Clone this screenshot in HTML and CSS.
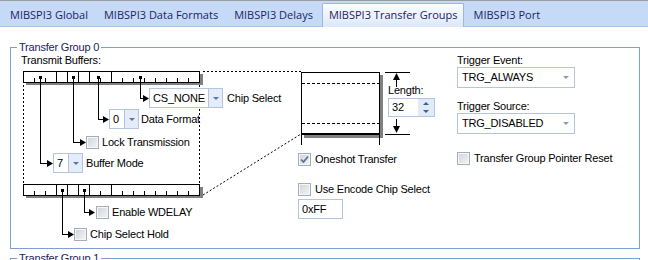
FILE: index.html
```html
<!DOCTYPE html>
<html lang="en">
<head>
    <meta charset="UTF-8">
    <title>MIBSPI3 Transfer Groups</title>
    <link rel="stylesheet" href="styles.css">
</head>
<body>
    <div class="tabs">
        <div class="tab">MIBSPI3 Global</div>
        <div class="tab">MIBSPI3 Data Formats</div>
        <div class="tab">MIBSPI3 Delays</div>
        <div class="tab active">MIBSPI3 Transfer Groups</div>
        <div class="tab">MIBSPI3 Port</div>
    </div>

    <div class="page">
        <fieldset class="group">
            <legend>Transfer Group 0</legend>
            <div class="group-body">

                <div class="diagram">
                    <!-- wires are drawn in page coordinates, the viewBox starts at the diagram's corner -->
                    <svg class="wires" width="446" height="194" viewBox="11 54 446 194">
                        <g fill="#808080">
                            <rect x="26" y="74" width="177" height="11"/>
                            <rect x="26" y="187" width="177" height="11"/>
                            <rect x="304" y="75" width="79" height="63"/>
                        </g>
                        <g fill="#fff" stroke="#000">
                            <rect x="23.5" y="71.5" width="176" height="11"/>
                            <rect x="23.5" y="184.5" width="176" height="11"/>
                            <rect x="301.5" y="72.5" width="78" height="62"/>
                        </g>
                        <g stroke="#000" fill="none" shape-rendering="crispEdges">
                            <path d="M56.5 72V82M67.5 72V82M78.5 72V82M89.5 72V82M111.5 72V82
                                     M34.5 78V82M45.5 78V82M100.5 78V82M122.5 78V82M133.5 78V82M144.5 78V82
                                     M155.5 78V82M166.5 78V82M177.5 78V82M188.5 78V82"/>
                            <path d="M56.5 185V195M67.5 185V195M78.5 185V195M89.5 185V195M111.5 185V195
                                     M34.5 191V195M45.5 191V195M100.5 191V195M122.5 191V195M133.5 191V195M144.5 191V195
                                     M155.5 191V195M166.5 191V195M177.5 191V195M188.5 191V195"/>
                            <path d="M40.5 77V163.5H47M73.5 77V142.5H80M98.5 77V119.5H103M140.5 77V98.5H143"/>
                            <path d="M62.5 190V234.5H68M84.5 190V212.5H89"/>
                            <path d="M301 134H380" stroke-width="2"/>
                            <path d="M301.5 135V145M379.5 135V145"/>
                            <path d="M385 72.5H410M385 134.5H410M396.5 79V87M396.5 119V127"/>
                        </g>
                        <g stroke="#000" fill="none" stroke-dasharray="2 2">
                            <path d="M23.5 85V184M199.5 85V184M203 71.5H301" shape-rendering="crispEdges"/>
                            <path d="M203 195L301 134"/>
                            <path d="M302 83.5H379M302 123.5H379" stroke-dasharray="3 2" shape-rendering="crispEdges"/>
                        </g>
                        <g fill="#000">
                            <rect x="39" y="76" width="3" height="3"/>
                            <rect x="72" y="76" width="3" height="3"/>
                            <rect x="97" y="76" width="3" height="3"/>
                            <rect x="139" y="76" width="3" height="3"/>
                            <rect x="61" y="189" width="3" height="3"/>
                            <rect x="83" y="189" width="3" height="3"/>
                            <polygon points="47,160 53,163.5 47,167"/>
                            <polygon points="80,139 86,142.5 80,146"/>
                            <polygon points="103,116 109,119.5 103,123"/>
                            <polygon points="143,95 149,98.5 143,102"/>
                            <polygon points="68,231 74,234.5 68,238"/>
                            <polygon points="89,209 95,212.5 89,216"/>
                            <polygon points="393,80 396.5,73 400,80"/>
                            <polygon points="393,126 396.5,133 400,126"/>
                        </g>
                    </svg>

                    <div class="caption">Transmit Buffers:</div>

                    <div class="node n-cs">
                        <div class="combo w-cs"><span class="value">CS_NONE</span><span class="drop"></span></div>
                        <span>Chip Select</span>
                    </div>
                    <div class="node n-df">
                        <div class="combo w-small"><span class="value">0</span><span class="drop"></span></div>
                        <span>Data Format</span>
                    </div>
                    <div class="node n-lock">
                        <span class="check"></span>
                        <span>Lock Transmission</span>
                    </div>
                    <div class="node n-buf">
                        <div class="combo w-small"><span class="value">7</span><span class="drop"></span></div>
                        <span>Buffer Mode</span>
                    </div>
                    <div class="node n-wdel">
                        <span class="check"></span>
                        <span>Enable WDELAY</span>
                    </div>
                    <div class="node n-csh">
                        <span class="check"></span>
                        <span>Chip Select Hold</span>
                    </div>

                    <div class="length">
                        <div class="length-label">Length:</div>
                        <div class="spin">
                            <span class="value">32</span>
                            <span class="spin-btns"><i class="up"></i><i class="down"></i></span>
                        </div>
                    </div>

                    <div class="options">
                        <label class="row">
                            <span class="check checked">
                                <svg width="11" height="11" viewBox="0 0 11 11"><path d="M2 5.5L4.5 8L9 2.5" fill="none" stroke="#5a6f95" stroke-width="1.7"/></svg>
                            </span>
                            Oneshot Transfer
                        </label>
                        <label class="row encode">
                            <span class="check"></span>
                            Use Encode Chip Select
                        </label>
                        <div class="textbox">0xFF</div>
                    </div>
                </div>

                <div class="trigger">
                    <div class="field-label">Trigger Event:</div>
                    <div class="combo plain w-trg"><span class="value">TRG_ALWAYS</span><span class="drop"></span></div>
                    <div class="field-label second">Trigger Source:</div>
                    <div class="combo plain w-trg"><span class="value">TRG_DISABLED</span><span class="drop"></span></div>
                    <label class="row reset">
                        <span class="check"></span>
                        Transfer Group Pointer Reset
                    </label>
                </div>

            </div>
        </fieldset>

        <fieldset class="group next">
            <legend>Transfer Group 1</legend>
        </fieldset>
    </div>
</body>
</html>
```

FILE: styles.css
```css
body {
    margin: 0;
    width: 648px;
    height: 260px;
    overflow: hidden;
    background: #ffffff;
    font-family: 'Liberation Sans', Arial, sans-serif;
    font-size: 11px;
    line-height: 13px;
    letter-spacing: -0.2px;
    color: #000;
}

/* tab strip */

.tabs {
    display: flex;
    align-items: flex-end;
    height: 25px;
    padding-left: 2px;
    background: #c4daf6;
    border-top: 1px solid #9c9c9c;
    border-bottom: 1px solid #a9c4e8;
    font-family: 'Open Sans', sans-serif;
    font-size: 11px;
    letter-spacing: 0;
    color: #1f2268;
}

.tab {
    height: 22px;
    line-height: 22px;
    padding: 0 8px;
    white-space: nowrap;
}

.tab.active {
    height: 23px;
    margin: 0 2px -1px 1px;
    padding: 0 5px 0 6px;
    border: 1px solid #9db6da;
    border-bottom: none;
    border-radius: 2px 2px 0 0;
    background: linear-gradient(#fbfdff, #dce8f7);
}

/* group boxes */

.page {
    padding: 14px 8px 0 10px;
}

.group {
    margin: 0;
    padding: 0;
    border: 1px solid #7a9fd0;
}

.group legend {
    margin-left: 6px;
    padding: 0 2px;
    color: #201c5c;
}

.group.next {
    margin-top: 3px;
    height: 40px;
}

.group-body {
    display: grid;
    grid-template-columns: 446px 1fr;
    height: 194px;
}

/* diagram canvas */

.diagram {
    position: relative;
}

.wires {
    position: absolute;
    left: 0;
    top: 0;
}

.caption {
    position: absolute;
    left: 10px;
    top: 0;
}

.node {
    position: absolute;
    display: flex;
    align-items: center;
    gap: 3px;
    white-space: nowrap;
}

.n-cs { left: 138px; top: 34px; gap: 4px; }
.n-df { left: 98px; top: 55px; gap: 2px; }
.n-lock { left: 75px; top: 82px; }
.n-buf { left: 42px; top: 99px; }
.n-wdel { left: 85px; top: 152px; }
.n-csh { left: 63px; top: 174px; gap: 3px; }

.length {
    position: absolute;
    left: 377px;
    top: 30px;
}

.length-label {
    height: 14px;
}

.spin {
    display: flex;
    width: 47px;
    height: 19px;
    box-sizing: border-box;
    border: 1px solid #b3c5df;
    background: #fff;
}

.spin .value {
    flex: 1;
    padding-left: 3px;
    line-height: 17px;
}

.spin-btns {
    display: flex;
    flex-direction: column;
    width: 16px;
    background: #e1eaf7;
}

.spin-btns i {
    flex: 1;
    display: flex;
    align-items: center;
    justify-content: center;
}

.spin-btns .up::after {
    content: "";
    border-left: 3px solid transparent;
    border-right: 3px solid transparent;
    border-bottom: 3px solid #3f5f8f;
}

.spin-btns .down::after {
    content: "";
    border-left: 3px solid transparent;
    border-right: 3px solid transparent;
    border-top: 3px solid #3f5f8f;
}

.options {
    position: absolute;
    left: 287px;
    top: 99px;
    display: flex;
    flex-direction: column;
}

.options .encode {
    margin-top: 17px;
}

.textbox {
    margin-top: 3px;
    width: 45px;
    height: 20px;
    box-sizing: border-box;
    border: 1px solid #b3c5df;
    padding-left: 3px;
    line-height: 18px;
}

/* controls */

.combo {
    display: flex;
    height: 20px;
    box-sizing: border-box;
    border: 1px solid #b3c5df;
    background: #fff;
}

.combo .value {
    flex: 1;
    padding-left: 3px;
    line-height: 18px;
    white-space: nowrap;
}

.combo .drop {
    width: 13px;
    border-left: 1px solid #b3c5df;
    background: #e3ecf8;
    display: flex;
    align-items: center;
    justify-content: center;
}

.combo .drop::after {
    content: "";
    border-left: 3px solid transparent;
    border-right: 3px solid transparent;
    border-top: 3px solid #5676a3;
}

.w-cs { width: 74px; }
.w-small { width: 30px; }

.combo.plain {
    width: 118px;
    height: 21px;
}

.combo.plain .value {
    padding-left: 4px;
    line-height: 19px;
}

.combo.plain .drop {
    width: 17px;
    border-left: none;
    background: #fff;
}

.combo.plain .drop::after {
    border-top-color: #8a9cb5;
}

.check {
    display: inline-flex;
    align-items: center;
    justify-content: center;
    width: 13px;
    height: 13px;
    box-sizing: border-box;
    border: 1px solid #a3aebd;
    background: linear-gradient(135deg, #cfd3d9, #f5f5f5);
    box-shadow: inset 0 0 0 1px #f4f6f8;
    flex: none;
}

.row {
    display: flex;
    align-items: center;
    gap: 4px;
    height: 13px;
    white-space: nowrap;
}

/* trigger column */

.trigger {
    display: flex;
    flex-direction: column;
    align-items: flex-start;
}

.field-label {
    height: 13px;
}

.field-label.second {
    margin-top: 12px;
}

.trigger .reset {
    margin-top: 18px;
}
```
